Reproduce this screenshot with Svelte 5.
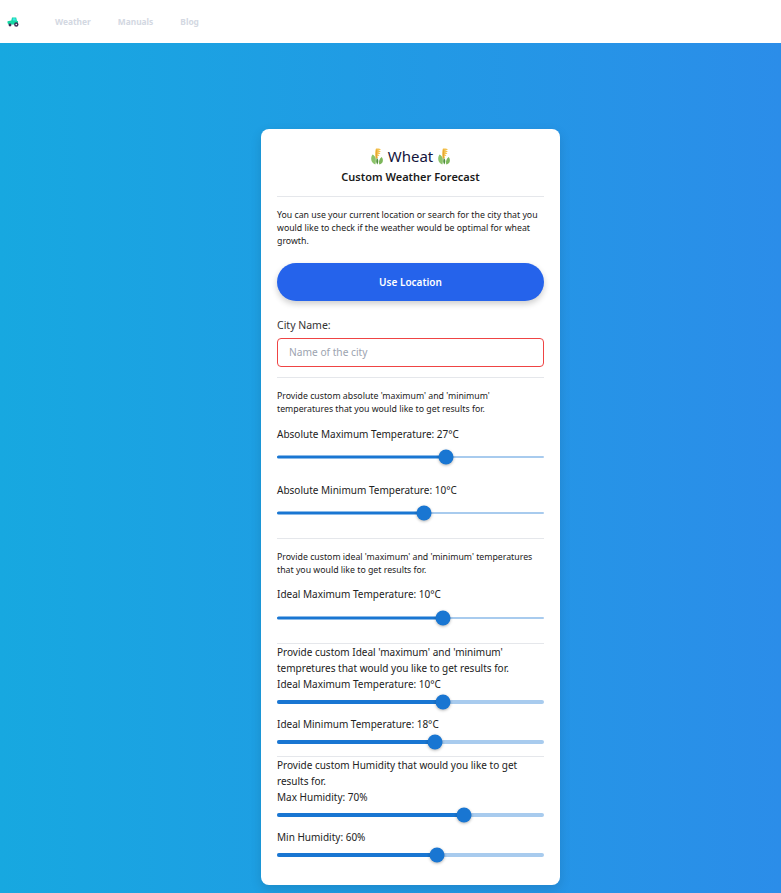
<script lang="ts">
  const links = ["Weather", "Manuals", "Blog"];
</script>

{#snippet wheat()}
  <svg class="wheat" viewBox="0 0 14 17" width="14" height="17" fill="none">
    <path d="M6 .6c1.800-.4 4 0 5 .7-.8.8-2 1-3.100.9 1 .2 2.200.5 2.900 1.200-.9.7-2 .8-3 .6 1 .3 2 .7 2.600 1.400-.9.6-2 .7-2.900.5.8.4 1.600 1 2 1.700-.8.5-1.700.5-2.500.2.500.5 1 1.100 1.100 1.800L5.800 11C5 8.500 4.800 3 6 .6z" fill="#f4c24f" />
    <path d="M6.700 1.500 6.400 10.500" stroke="#e0962a" stroke-width=".7" />
    <path d="M2.500 6.500c1.800.8 3 2.500 3.300 4.500.2 2 0 4-.5 5.400-2-.4-3.600-2-4-4.300C1 10 1.400 8 2.500 6.500z" fill="#8cc36a" />
    <path d="M11.700 9c1 1.200 1.400 2.600 1.100 4.200-.3 1.600-1.500 2.900-3.400 3.300-.6-1.300-.6-3 0-4.500.5-1.300 1.300-2.300 2.300-3z" fill="#7cb65a" />
    <path d="M7 10c.9.900 1.300 2 1.300 3.300 0 1.300-.4 2.400-1 3.200-.7-.9-1.100-2-1.100-3.200 0-1.300.2-2.400.8-3.300z" fill="#4f8f3a" />
  </svg>
{/snippet}

{#snippet slider(value: number, thick: boolean)}
  <div class={["slider", thick && "thick"]}>
    <div class="rail"></div>
    <div class="track" style:width="{value}%"></div>
    <div class="thumb" style:left="{value}%"></div>
  </div>
{/snippet}

<nav>
  <svg class="tractor" viewBox="0 0 12 10" width="12" height="10">
    <path d="M5 .5h4.200L10 4h1v3.500H1.500L.5 6V4.200L4.300 3.600z" fill="#14d8a4" />
    <path d="M5.800 1.300h2.600l.4 2.300H5.800z" fill="#3fe6ec" />
    <circle cx="3" cy="8" r="1.400" fill="#3c2f55" />
    <circle cx="9.300" cy="7.500" r="2.200" fill="#3c2f55" />
    <circle cx="9.300" cy="7.500" r=".8" fill="#fff" />
  </svg>
  <ul>
    {#each links as link}
      <li>{link}</li>
    {/each}
  </ul>
</nav>

<main>
  <section class="card">
    <h1>{@render wheat()} <span>Wheat</span> {@render wheat()}</h1>
    <h2>Custom Weather Forecast</h2>
    <hr class="first" />
    <p class="note intro">
      You can use your current location or search for the city that you would like to check if the weather would be optimal for wheat growth.
    </p>
    <button>Use Location</button>

    <label for="city">City Name:</label>
    <input id="city" type="text" placeholder="Name of the city" />
    <hr class="after-input" />

    <p class="note">Provide custom absolute 'maximum' and 'minimum' temperatures that you would like to get results for.</p>
    <div class="field abs">Absolute Maximum Temperature: 27°C</div>
    {@render slider(63.300, false)}
    <div class="field abs second">Absolute Minimum Temperature: 10°C</div>
    {@render slider(55, false)}
    <hr class="after-slider" />

    <p class="note">Provide custom ideal 'maximum' and 'minimum' temperatures that you would like to get results for.</p>
    <div class="field">Ideal Maximum Temperature: 10°C</div>
    {@render slider(62, false)}
    <hr class="after-slider" />

    <div class="tight">
      <p>Provide custom Ideal 'maximum' and 'minimum' tempretures that would you like to get results for.</p>
      <div>Ideal Maximum Temperature: 10°C</div>
      {@render slider(62, true)}
      <div class="next">Ideal Minimum Temperature: 18°C</div>
      {@render slider(59, true)}
    </div>
    <hr class="in-tight" />
    <div class="tight">
      <p>Provide custom Humidity that would you like to get results for.</p>
      <div>Max Humidity: 70%</div>
      {@render slider(70, true)}
      <div class="next">Min Humidity: 60%</div>
      {@render slider(60, true)}
    </div>
  </section>
</main>

<style>
  :global(body) {
    font-family: "Noto Sans", "Open Sans", sans-serif;
    color: #1a1a2e;
    background: #fff;
  }

  nav {
    height: 43px;
    background: #fff;
    display: flex;
    align-items: center;
    padding-left: 7px;
  }
  .tractor {
    margin-top: 1px;
  }
  ul {
    display: flex;
    gap: 27px;
    list-style: none;
    margin: 0 0 0 36px;
    padding: 0;
    font-size: 8.400px;
    font-weight: 700;
    color: #d3d8e2;
  }

  main {
    background: linear-gradient(to right, #17a8e0, #2b8de9);
    padding: 86px 0 8px 261px;
    height: 850px;
    box-sizing: border-box;
  }

  .card {
    width: 299px;
    height: 756px;
    box-sizing: border-box;
    padding: 16px;
    background: #fff;
    border-radius: 8px;
    box-shadow: 0 4px 12px rgba(0, 0, 0, 0.12);
  }

  h1 {
    display: flex;
    align-items: center;
    justify-content: center;
    gap: 4px;
    margin: 0;
    height: 23px;
    font-size: 15px;
    font-weight: 400;
    color: #14143c;
  }
  h1 span {
    margin-top: -2px;
  }
  h2 {
    margin: 1px 0 0;
    text-align: center;
    font-size: 11px;
    line-height: 16px;
    font-weight: 600;
    color: #1a1a1a;
  }

  hr {
    border: 0;
    height: 1px;
    background: #e5e7eb;
    margin: 0;
  }
  hr.first {
    margin-top: 11px;
  }
  hr.after-input {
    margin-top: 10px;
  }
  hr.after-slider {
    margin-top: 18px;
  }
  hr.in-tight {
    margin-top: 7px;
  }

  .note {
    margin: 12px 0 0;
    font-size: 8.750px;
    line-height: 13px;
    color: #222;
  }

  button {
    display: block;
    width: 100%;
    height: 38px;
    margin-top: 15px;
    border: 0;
    border-radius: 19px;
    background: #2563eb;
    color: #fff;
    font: 600 10px "Noto Sans", sans-serif;
    box-shadow: 0 3px 6px rgba(0, 0, 0, 0.2);
  }

  label {
    display: block;
    margin-top: 17px;
    font-size: 10.500px;
    line-height: 15px;
    color: #333;
  }
  input {
    display: block;
    width: 100%;
    height: 29px;
    margin-top: 5px;
    box-sizing: border-box;
    border: 1px solid #ef4444;
    border-radius: 4px;
    padding: 0 11px 1px;
    font: 10.200px "Noto Sans", sans-serif;
    outline: none;
  }
  input::placeholder {
    color: #9ca3af;
  }

  .field {
    margin-top: 10px;
    font-size: 10px;
    line-height: 15px;
    color: #222;
  }
  .field.abs {
    margin-top: 11px;
  }
  .field.abs.second {
    margin-top: 19px;
  }
  .field.abs + .slider {
    margin-top: 8px;
  }

  .slider {
    position: relative;
    height: 14px;
    margin-top: 9px;
  }
  .rail,
  .track {
    position: absolute;
    left: 0;
    top: 50%;
    transform: translateY(-50%);
    border-radius: 2px;
    background: #1976d2;
  }
  .rail {
    width: 100%;
    height: 2px;
    opacity: 0.38;
  }
  .track {
    height: 3px;
  }
  .thick .rail {
    height: 4px;
  }
  .thick .track {
    height: 4px;
  }
  .thumb {
    position: absolute;
    top: 50%;
    width: 15px;
    height: 15px;
    border-radius: 50%;
    background: #1976d2;
    transform: translate(-50%, -50%);
    box-shadow: 0 1px 3px rgba(0, 0, 0, 0.3);
  }

  .tight {
    font-size: 10px;
    line-height: 16px;
    color: #222;
  }
  .tight p {
    margin: 0;
  }
  .tight .slider {
    margin-top: 3px;
  }
  .tight .next {
    margin-top: 7px;
  }
</style>
